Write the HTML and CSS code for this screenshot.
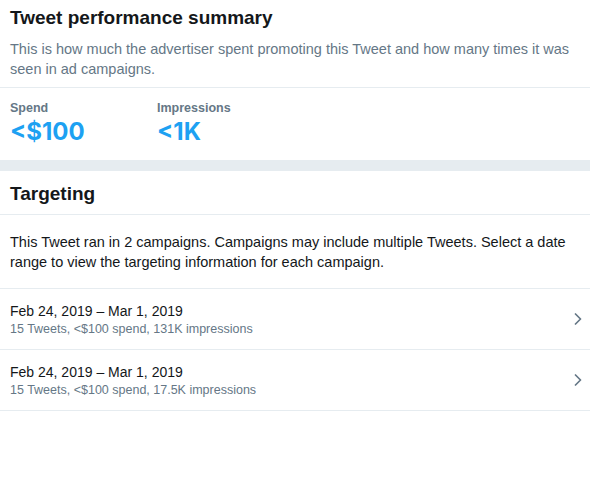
FILE: index.html
```html
<!DOCTYPE html>
<html>
<head>
<meta charset="utf-8">
<link rel="stylesheet" href="styles.css">
</head>
<body>
<div class="page">
  <section class="summary">
    <div class="summary-head">
      <h2 class="title">Tweet performance summary</h2>
      <p class="desc">This is how much the advertiser spent promoting this Tweet and how many times it was seen in ad campaigns.</p>
    </div>
    <div class="stats">
      <div class="stat stat-spend">
        <div class="stat-label">Spend</div>
        <div class="stat-value">&lt;$100</div>
      </div>
      <div class="stat">
        <div class="stat-label">Impressions</div>
        <div class="stat-value">&lt;1K</div>
      </div>
    </div>
  </section>
  <div class="band"></div>
  <section class="targeting">
    <div class="targeting-head">
      <h2 class="title">Targeting</h2>
    </div>
    <p class="info">This Tweet ran in 2 campaigns. Campaigns may include multiple Tweets. Select a date range to view the targeting information for each campaign.</p>
    <ul class="campaigns">
      <li class="campaign">
        <div class="campaign-text">
          <div class="campaign-date">Feb 24, 2019 – Mar 1, 2019</div>
          <div class="campaign-meta">15 Tweets, &lt;$100 spend, 131K impressions</div>
        </div>
        <svg class="chevron" width="8" height="12" viewBox="0 0 8 12"><path d="M1.5 1 L6.5 6 L1.5 11" fill="none" stroke="#657786" stroke-width="1.7" stroke-linecap="round" stroke-linejoin="round"/></svg>
      </li>
      <li class="campaign">
        <div class="campaign-text">
          <div class="campaign-date">Feb 24, 2019 – Mar 1, 2019</div>
          <div class="campaign-meta">15 Tweets, &lt;$100 spend, 17.5K impressions</div>
        </div>
        <svg class="chevron" width="8" height="12" viewBox="0 0 8 12"><path d="M1.5 1 L6.5 6 L1.5 11" fill="none" stroke="#657786" stroke-width="1.7" stroke-linecap="round" stroke-linejoin="round"/></svg>
      </li>
    </ul>
  </section>
</div>
</body>
</html>
```
FILE: styles.css
```css
* { box-sizing: border-box; }
html, body { margin: 0; padding: 0; background: #ffffff; }
body {
  font-family: "Liberation Sans", Arial, sans-serif;
  color: #14171a;
  width: 590px;
}
.title {
  margin: 0;
  font-size: 19px;
  line-height: 25px;
  font-weight: bold;
  color: #14171a;
}
.summary-head {
  padding: 5px 10px 8px 10px;
  border-bottom: 1px solid #e6ecf0;
}
.desc {
  margin: 9px 0 0 0;
  font-size: 14.5px;
  line-height: 20px;
  color: #657786;
}
.stats {
  display: flex;
  padding: 12px 10px 14px 10px;
}
.stat-spend { width: 147px; }
.stat-label {
  font-size: 12.5px;
  line-height: 16px;
  font-weight: bold;
  color: #657786;
}
.stat-value {
  margin-top: 2px;
  font-family: Inter, "Liberation Sans", sans-serif;
  font-size: 24px;
  line-height: 28px;
  font-weight: bold;
  color: #1da1f2;
}
.band {
  height: 11px;
  background: #e6ecf0;
}
.targeting-head {
  padding: 10px 10px 8px 10px;
  border-bottom: 1px solid #e6ecf0;
}
.info {
  margin: 0;
  padding: 17px 10px 16px 10px;
  font-size: 14.5px;
  line-height: 20px;
  color: #14171a;
  border-bottom: 1px solid #e6ecf0;
}
.campaigns {
  list-style: none;
  margin: 0;
  padding: 0;
}
.campaign {
  display: flex;
  align-items: center;
  justify-content: space-between;
  padding: 12px 8px 12px 10px;
  border-bottom: 1px solid #e6ecf0;
}
.campaign-date {
  font-size: 14px;
  line-height: 20px;
  color: #14171a;
}
.campaign-meta {
  font-size: 12.5px;
  line-height: 16px;
  color: #657786;
}
.chevron { display: block; }
```
